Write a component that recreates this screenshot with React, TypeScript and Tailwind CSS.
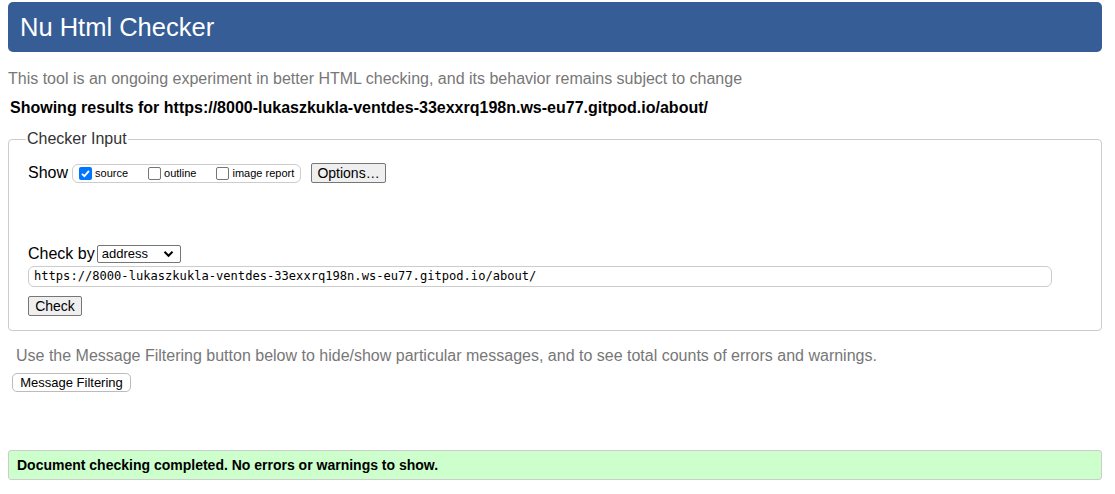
import React from "react";

const url = "https://8000-lukaszkukla-ventdes-33exxrq198n.ws-eu77.gitpod.io/about/";

function Box({ checked, label }: { checked?: boolean; label: string }) {
  return (
    <label className="flex items-center gap-[3px]">
      {checked ? (
        <span className="w-[13px] h-[13px] rounded-[2px] bg-[#0075ff] flex items-center justify-center">
          <svg width="11" height="11" viewBox="0 0 11 11">
            <path d="M2 5.8 L4.4 8.2 L9 2.8" fill="none" stroke="white" strokeWidth="1.8" />
          </svg>
        </span>
      ) : (
        <span className="w-[13px] h-[13px] rounded-[2px] border border-[#767676] bg-white" />
      )}
      <span className="text-[11px] text-black">{label}</span>
    </label>
  );
}

export default function App() {
  return (
    <div className="w-full min-h-[494px] bg-white pl-2 pr-[13px] pt-[2px] font-['Liberation_Sans',Arial,sans-serif] text-black">
      <div className="h-[50px] bg-[#365d95] rounded-[5px] flex items-center pl-3 text-white text-[25.5px]">
        Nu Html Checker
      </div>
      <p className="mt-[17px] text-[16px] leading-5 text-[#777]">
        This tool is an ongoing experiment in better HTML checking, and its behavior remains subject to change
      </p>
      <p className="mt-[9px] ml-[2px] text-[16px] leading-5 font-bold">Showing results for {url}</p>

      <fieldset className="mt-[12px] border border-[#ccc] rounded-[4px] pl-[19px] pb-[14px]">
        <legend className="px-[1px] text-[16px] leading-[18px] text-[#333] -ml-[2px]">Checker Input</legend>

        <div className="mt-[15px] flex items-center h-[20px] text-[16px]">
          <span className="mr-[4px]">Show</span>
          <div className="h-[19px] w-[229px] border border-[#ccc] rounded-[6px] flex items-center pl-[6px] gap-[20px]">
            <Box checked label="source" />
            <Box label="outline" />
            <Box label="image report" />
          </div>
          <div className="ml-[10px] h-[20px] w-[75px] bg-[#efefef] border border-[#767676] rounded-[2px] flex items-center justify-center text-[14px]">
            Options…
          </div>
        </div>

        <div className="mt-[61px] flex items-center h-[20px] text-[16px]">
          <span className="mr-[2px]">Check by</span>
          <div className="h-[18px] w-[84px] border border-[#767676] rounded-[2px] flex items-center justify-between pl-[4px] pr-[6px] text-[13px]">
            <span>address</span>
            <svg width="11" height="8" viewBox="0 0 11 8">
              <path d="M1.5 1.8 L5.5 5.8 L9.5 1.8" fill="none" stroke="black" strokeWidth="2" />
            </svg>
          </div>
        </div>

        <div className="mt-[2px] h-[21px] w-[1024px] border border-[#ccc] rounded-[6px] flex items-center pl-[5px] font-['DejaVu_Sans_Mono',monospace] text-[12.1px]">
          {url}
        </div>

        <div className="mt-[9px] h-[20px] w-[54px] bg-[#efefef] border border-[#767676] rounded-[2px] flex items-center justify-center text-[14px]">
          Check
        </div>
      </fieldset>

      <p className="mt-[15px] ml-[8px] text-[16px] leading-5 text-[#777]">
        Use the Message Filtering button below to hide/show particular messages, and to see total counts of errors and warnings.
      </p>
      <div className="mt-[7px] ml-[4px] h-[19px] w-[119px] border border-[#bbb] rounded-[5px] bg-white flex items-center justify-center text-[13px]">
        Message Filtering
      </div>

      <div className="mt-[58px] h-[30px] bg-[#ccffcc] border border-[#ccc] rounded-[3px] flex items-center pl-[8px] text-[14px] font-bold">
        Document checking completed. No errors or warnings to show.
      </div>
    </div>
  );
}
